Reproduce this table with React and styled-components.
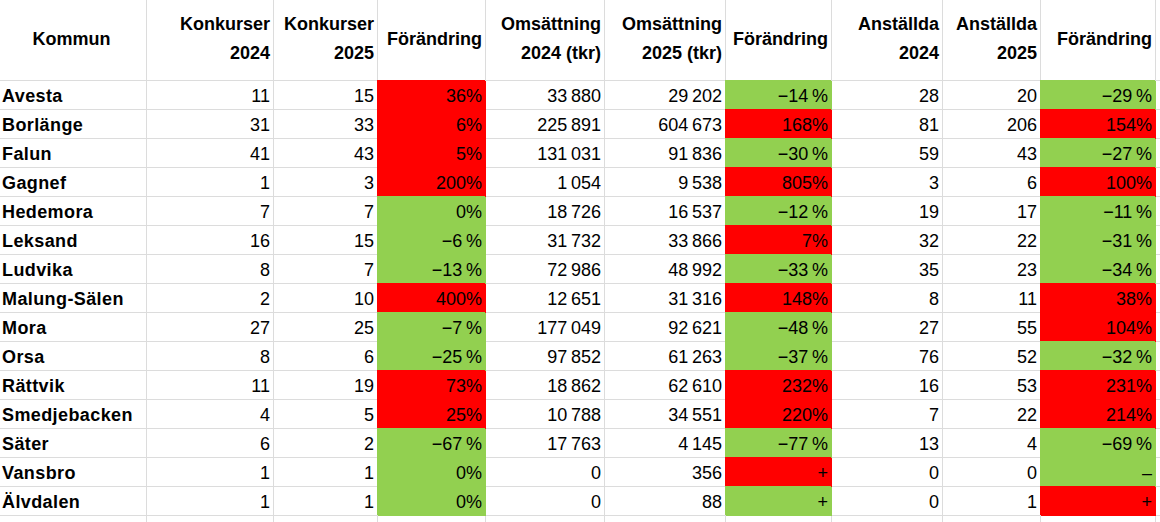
import React from 'react';
import styled, { createGlobalStyle } from 'styled-components';

const GlobalStyle = createGlobalStyle`
  html, body {
    margin: 0;
    padding: 0;
    background: #ffffff;
  }
  body {
    font-family: "Liberation Sans", Arial, sans-serif;
    color: #000000;
  }
`;

const GRID = '#dcdcdc';
const FILL = {
  r: '#ff0000',
  g: '#92d050',
};

const COLUMNS = [147, 127, 104, 108, 119, 121, 106, 111, 98, 115];

const Sheet = styled.div`
  display: grid;
  grid-template-columns: ${COLUMNS.map((w) => `${w}px`).join(' ')} 1fr;
  grid-auto-rows: 29px;
  grid-template-rows: 81px;
  width: 1160px;
  height: 522px;
  overflow: hidden;
  font-size: 18px;
`;

const Cell = styled.div`
  box-sizing: border-box;
  border-right: 1px solid ${GRID};
  border-bottom: 1px solid ${GRID};
  display: flex;
  white-space: nowrap;
  overflow: hidden;
`;

const HeadCell = styled(Cell)`
  align-items: center;
  justify-content: ${(p) => (p.$center ? 'center' : 'flex-end')};
  text-align: ${(p) => (p.$center ? 'center' : 'right')};
  padding: 0 3px 2px 0;
  font-weight: 700;
  line-height: 29px;
`;

const DataCell = styled(Cell)`
  align-items: flex-end;
  justify-content: flex-end;
  padding: 0 3px 3px 0;
  line-height: 20px;
  background: ${(p) => (p.$fill ? FILL[p.$fill] : 'transparent')};
  border-color: ${(p) => (p.$fill ? FILL[p.$fill] : GRID)};
  box-shadow: ${(p) => (p.$fill ? `-1px -1px 0 0 ${FILL[p.$fill]}` : 'none')};
`;

const NameCell = styled(Cell)`
  align-items: flex-end;
  justify-content: flex-start;
  padding: 0 0 3px 2px;
  line-height: 20px;
  font-weight: 700;
  letter-spacing: 0.4px;
`;

const EmptyCell = styled(Cell)`
  border-right: ${(p) => (p.$last ? 'none' : `1px solid ${GRID}`)};
`;

const S = '\u2009';
const M = '\u2212';

const headers = [
  { label: ['Kommun'], center: true },
  { label: ['Konkurser', '2024'] },
  { label: ['Konkurser', '2025'] },
  { label: ['Förändring'] },
  { label: ['Omsättning', '2024 (tkr)'] },
  { label: ['Omsättning', '2025 (tkr)'] },
  { label: ['Förändring'] },
  { label: ['Anställda', '2024'] },
  { label: ['Anställda', '2025'] },
  { label: ['Förändring'] },
];

// name, k24, k25, change, fill, o24, o25, change, fill, a24, a25, change, fill
const rows = [
  ['Avesta', '11', '15', '36%', 'r', `33${S}880`, `29${S}202`, `${M}14${S}%`, 'g', '28', '20', `${M}29${S}%`, 'g'],
  ['Borlänge', '31', '33', '6%', 'r', `225${S}891`, `604${S}673`, '168%', 'r', '81', '206', '154%', 'r'],
  ['Falun', '41', '43', '5%', 'r', `131${S}031`, `91${S}836`, `${M}30${S}%`, 'g', '59', '43', `${M}27${S}%`, 'g'],
  ['Gagnef', '1', '3', '200%', 'r', `1${S}054`, `9${S}538`, '805%', 'r', '3', '6', '100%', 'r'],
  ['Hedemora', '7', '7', '0%', 'g', `18${S}726`, `16${S}537`, `${M}12${S}%`, 'g', '19', '17', `${M}11${S}%`, 'g'],
  ['Leksand', '16', '15', `${M}6${S}%`, 'g', `31${S}732`, `33${S}866`, '7%', 'r', '32', '22', `${M}31${S}%`, 'g'],
  ['Ludvika', '8', '7', `${M}13${S}%`, 'g', `72${S}986`, `48${S}992`, `${M}33${S}%`, 'g', '35', '23', `${M}34${S}%`, 'g'],
  ['Malung-Sälen', '2', '10', '400%', 'r', `12${S}651`, `31${S}316`, '148%', 'r', '8', '11', '38%', 'r'],
  ['Mora', '27', '25', `${M}7${S}%`, 'g', `177${S}049`, `92${S}621`, `${M}48${S}%`, 'g', '27', '55', '104%', 'r'],
  ['Orsa', '8', '6', `${M}25${S}%`, 'g', `97${S}852`, `61${S}263`, `${M}37${S}%`, 'g', '76', '52', `${M}32${S}%`, 'g'],
  ['Rättvik', '11', '19', '73%', 'r', `18${S}862`, `62${S}610`, '232%', 'r', '16', '53', '231%', 'r'],
  ['Smedjebacken', '4', '5', '25%', 'r', `10${S}788`, `34${S}551`, '220%', 'r', '7', '22', '214%', 'r'],
  ['Säter', '6', '2', `${M}67${S}%`, 'g', `17${S}763`, `4${S}145`, `${M}77${S}%`, 'g', '13', '4', `${M}69${S}%`, 'g'],
  ['Vansbro', '1', '1', '0%', 'g', '0', '356', '+', 'r', '0', '0', '–', 'g'],
  ['Älvdalen', '1', '1', '0%', 'g', '0', '88', '+', 'g', '0', '1', '+', 'r'],
];

const DataRow = ({ row }) => {
  const [name, k24, k25, kc, kf, o24, o25, oc, of, a24, a25, ac, af] = row;
  return (
    <>
      <NameCell>{name}</NameCell>
      <DataCell>{k24}</DataCell>
      <DataCell>{k25}</DataCell>
      <DataCell $fill={kf}>{kc}</DataCell>
      <DataCell>{o24}</DataCell>
      <DataCell>{o25}</DataCell>
      <DataCell $fill={of}>{oc}</DataCell>
      <DataCell>{a24}</DataCell>
      <DataCell>{a25}</DataCell>
      <DataCell $fill={af}>{ac}</DataCell>
      <EmptyCell $last />
    </>
  );
};

const App = () => {
  return (
    <>
      <GlobalStyle />
      <Sheet>
        {headers.map((h, i) => (
          <HeadCell key={i} $center={h.center}>
            <div>
              {h.label.map((line, j) => (
                <div key={j}>{line}</div>
              ))}
            </div>
          </HeadCell>
        ))}
        <EmptyCell $last />

        {rows.map((row) => (
          <DataRow key={row[0]} row={row} />
        ))}

        {COLUMNS.map((_, i) => (
          <EmptyCell key={`e${i}`} />
        ))}
        <EmptyCell $last />
      </Sheet>
    </>
  );
};

export default App;
